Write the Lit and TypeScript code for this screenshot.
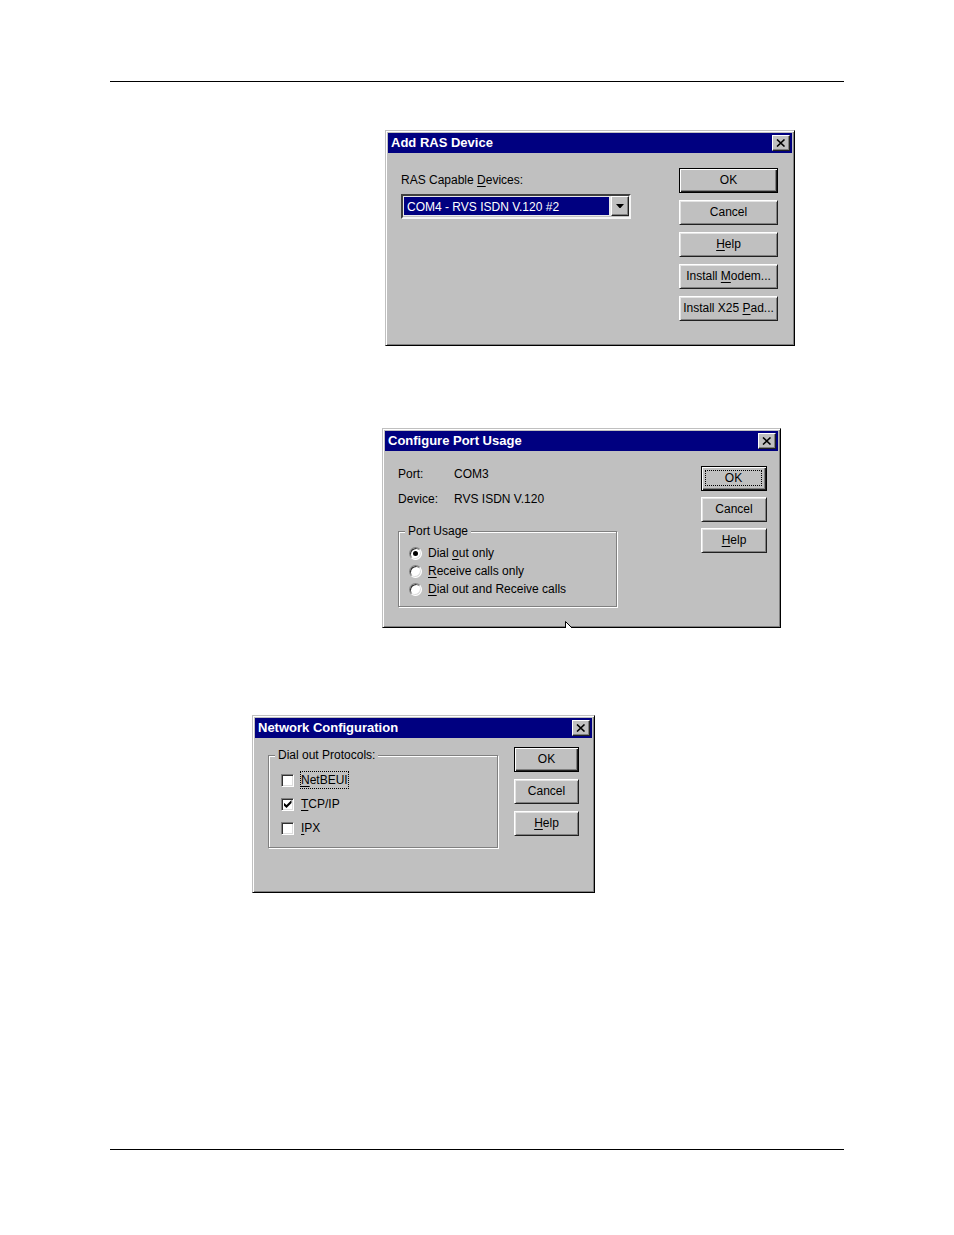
import { LitElement, html, svg, css, nothing, TemplateResult } from "lit";
import { customElement, property } from "lit/decorators.js";

// Turns "Install &Modem..." into text with the access key underlined.
function accessText(text: string): TemplateResult {
  const at = text.indexOf("&");
  if (at < 0) return html`${text}`;
  return html`${text.slice(0, at)}<u>${text[at + 1]}</u>${text.slice(at + 2)}`;
}

const base = css`
  * {
    box-sizing: border-box;
  }
  button,
  select,
  input {
    margin: 0;
    font: inherit;
    color: inherit;
    border-radius: 0;
    appearance: none;
    outline: none;
  }
  u {
    text-underline-offset: 2px;
    text-decoration-skip-ink: none;
    text-decoration-thickness: 1px;
  }
`;

@customElement("classic-dialog")
class ClassicDialog extends LitElement {
  @property() heading = "";

  static styles = [
    base,
    css`
      :host {
        display: block;
        position: relative;
        box-sizing: border-box;
        max-width: 100%;
        padding: 2px;
        background: #c0c0c0;
        border: 1px solid;
        border-color: #c0c0c0 #000 #000 #c0c0c0;
        box-shadow: inset 1px 1px #fff, inset -1px -1px #808080;
        color: #000;
        font: 12px/16px "Liberation Sans", Arial, sans-serif;
      }
      .title {
        display: flex;
        align-items: center;
        justify-content: space-between;
        height: 20px;
        padding: 0 2px 0 3px;
        background: #000080;
        color: #fff;
      }
      h2 {
        margin: 0;
        font-size: 13px;
        line-height: 20px;
        font-weight: bold;
      }
      .close {
        display: grid;
        place-items: center;
        width: 18px;
        height: 16px;
        padding: 0;
        color: #000;
        background: #c0c0c0;
        border: 1px solid;
        border-color: #fff #202020 #202020 #fff;
        box-shadow: inset -1px -1px #808080;
      }
    `,
  ];

  render() {
    return html`
      <div class="title">
        <h2>${this.heading}</h2>
        <button class="close" type="button" aria-label="Close">
          <svg width="10" height="8" viewBox="0 0 10 8" aria-hidden="true">
            <path d="M1 .5 8.5 7.5M8.5 .5 1 7.5" stroke="#000" stroke-width="1.6" />
          </svg>
        </button>
      </div>
      <slot></slot>
    `;
  }
}

interface Choice {
  text: string;
  checked?: boolean;
  focused?: boolean;
}

@customElement("app-root")
class AppRoot extends LitElement {
  static styles = [
    base,
    css`
      :host {
        display: block;
        background: #fff;
      }
      .page {
        display: flex;
        flex-direction: column;
        align-items: flex-start;
        min-height: 100vh;
        padding: 81px 110px 85px;
      }
      .rule {
        width: 100%;
        margin: 0;
        border: 0;
        border-top: 1px solid #000;
      }
      .rule.foot {
        margin-top: auto;
      }
      .device {
        width: 410px;
        margin: 48px 0 0 275px;
      }
      .port {
        width: 399px;
        margin: 82px 0 0 272px;
      }
      .network {
        width: 343px;
        margin: 87px 0 0 142px;
      }
      .body {
        display: flex;
        justify-content: space-between;
        align-items: flex-start;
      }
      .device .body {
        padding: 15px 14px 22px 13px;
      }
      .port .body {
        padding: 15px 11px 18px 13px;
      }
      .network .body {
        padding: 9px 13px 42px;
      }
      .buttons {
        display: flex;
        flex-direction: column;
        gap: 7px;
        width: 65px;
      }
      .device .buttons {
        width: 99px;
      }
      .port .buttons {
        gap: 6px;
        width: 66px;
      }
      .push {
        display: grid;
        height: 25px;
        padding: 2px;
        background: #c0c0c0;
        border: 1px solid;
        border-color: #fff #202020 #202020 #fff;
        box-shadow: inset 1px 1px #e4e4e4, inset -1px -1px #808080;
        white-space: nowrap;
      }
      .push span {
        display: block;
        line-height: 19px;
      }
      .push.default {
        border-color: #000;
        box-shadow: inset 1px 1px #fff, inset -1px -1px #202020,
          inset -2px -2px #808080;
      }
      .push.focused span {
        margin: 1px 2px 2px 1px;
        line-height: 14px;
        border: 1px dotted #000;
      }
      .field {
        display: flex;
        flex-direction: column;
        gap: 6px;
        width: 230px;
        padding-top: 4px;
      }
      .combo {
        position: relative;
        display: grid;
      }
      .combo select {
        height: 25px;
        padding: 2px 0 0 4px;
        line-height: 19px;
        color: #fff;
        background: linear-gradient(#000080, #000080) 1px 1px / calc(100% - 21px)
          calc(100% - 3px) no-repeat #e8e8e8;
        border: 2px solid;
        border-color: #404040 #f4f4f4 #f4f4f4 #404040;
        box-shadow: inset -1px -1px #c0c0c0;
      }
      .arrow {
        position: absolute;
        top: 2px;
        right: 2px;
        display: grid;
        place-items: center;
        width: 18px;
        height: 20px;
        background: #c0c0c0;
        border: 1px solid;
        border-color: #fff #202020 #202020 #fff;
        box-shadow: inset -1px -1px #808080;
        pointer-events: none;
      }
      .settings {
        width: 219px;
      }
      .facts {
        display: grid;
        grid-template-columns: 56px 1fr;
        row-gap: 9px;
        margin: 0 0 16px;
      }
      .facts dt,
      .facts dd {
        margin: 0;
      }
      .group {
        min-width: 0;
        margin: 0;
        padding: 5px 6px 8px;
        border: 1px solid #808080;
        box-shadow: 1px 1px #fff, inset 1px 1px #fff;
      }
      .group legend {
        padding: 0 3px;
        background: #c0c0c0;
      }
      .network .group {
        width: 230px;
        padding-bottom: 7px;
      }
      .choice {
        display: flex;
        align-items: center;
        gap: 5px;
        height: 18px;
        padding-left: 4px;
      }
      .network .choice {
        gap: 6px;
        height: 24px;
        padding-left: 6px;
      }
      .choice span {
        border: 1px solid transparent;
      }
      .choice .focused {
        border: 1px dotted #000;
      }
      .choice input {
        display: grid;
        place-items: center;
        flex: none;
        width: 13px;
        height: 13px;
        background: #fff;
        border: 1px solid;
        border-color: #808080 #fff #fff #808080;
        box-shadow: inset 1px 1px #303030, inset -1px -1px #dcdcdc;
      }
      .choice input[type="radio"] {
        border-radius: 50%;
      }
      .choice input[type="radio"]:checked::before {
        content: "";
        width: 5px;
        height: 5px;
        border-radius: 50%;
        background: #000;
      }
      .choice input[type="checkbox"]:checked::before {
        content: "";
        width: 8px;
        height: 8px;
        background: #000;
        clip-path: polygon(0 30%, 38% 62%, 100% 0, 100% 38%, 38% 100%, 0 66%);
      }
      .pointer {
        position: absolute;
        left: 182px;
        bottom: -1px;
        display: block;
      }
    `,
  ];

  private push(text: string, kind = "") {
    return html`<button type="button" class="push ${kind}">
      <span>${accessText(text)}</span>
    </button>`;
  }

  private choices(type: "radio" | "checkbox", items: Choice[]) {
    return items.map(
      (item) => html`<label class="choice">
        <input type=${type} name=${type === "radio" ? "usage" : "protocol"} .checked=${!!item.checked} />
        <span class=${item.focused ? "focused" : nothing}>${accessText(item.text)}</span>
      </label>`
    );
  }

  render() {
    return html`
      <main class="page">
        <hr class="rule" />

        <classic-dialog class="device" heading="Add RAS Device">
          <div class="body">
            <div class="field">
              <label for="devices">${accessText("RAS Capable &Devices:")}</label>
              <div class="combo">
                <select id="devices">
                  <option>COM4 - RVS ISDN V.120 #2</option>
                </select>
                <div class="arrow">
                  <svg width="8" height="4" viewBox="0 0 8 4" aria-hidden="true">
                    ${svg`<path d="M0 0H8L4.5 4H3.5Z" />`}
                  </svg>
                </div>
              </div>
            </div>
            <div class="buttons">
              ${this.push("OK", "default")} ${this.push("Cancel")}
              ${this.push("&Help")} ${this.push("Install &Modem...")}
              ${this.push("Install X25 &Pad...")}
            </div>
          </div>
        </classic-dialog>

        <classic-dialog class="port" heading="Configure Port Usage">
          <div class="body">
            <div class="settings">
              <dl class="facts">
                <dt>Port:</dt>
                <dd>COM3</dd>
                <dt>Device:</dt>
                <dd>RVS ISDN V.120</dd>
              </dl>
              <fieldset class="group">
                <legend>Port Usage</legend>
                ${this.choices("radio", [
                  { text: "Dial &out only", checked: true },
                  { text: "&Receive calls only" },
                  { text: "&Dial out and Receive calls" },
                ])}
              </fieldset>
            </div>
            <div class="buttons">
              ${this.push("OK", "default focused")} ${this.push("Cancel")}
              ${this.push("&Help")}
            </div>
          </div>
          <svg class="pointer" width="8" height="7" viewBox="0 0 8 7" aria-hidden="true">
            <path d="M.5 7V.5L7 7" fill="#fff" stroke="#000" />
            <path d="M1 6.5H6" stroke="#fff" />
          </svg>
        </classic-dialog>

        <classic-dialog class="network" heading="Network Configuration">
          <div class="body">
            <fieldset class="group">
              <legend>Dial out Protocols:</legend>
              ${this.choices("checkbox", [
                { text: "&NetBEUI", focused: true },
                { text: "&TCP/IP", checked: true },
                { text: "&IPX" },
              ])}
            </fieldset>
            <div class="buttons">
              ${this.push("OK", "default")} ${this.push("Cancel")}
              ${this.push("&Help")}
            </div>
          </div>
        </classic-dialog>

        <hr class="rule foot" />
      </main>
    `;
  }
}
